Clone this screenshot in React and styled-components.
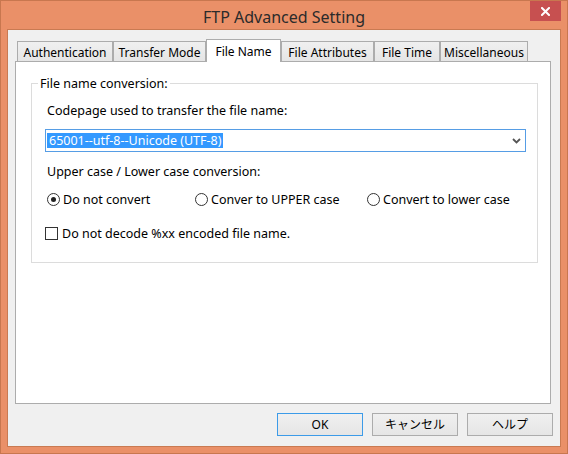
import React from "react";
import styled, { createGlobalStyle } from "styled-components";

const GlobalStyle = createGlobalStyle`
  html, body {
    margin: 0;
    padding: 0;
    background: #ea9068;
  }
  body {
    font-family: "Noto Sans", "Noto Sans CJK JP", sans-serif;
    font-size: 12.5px;
    line-height: 15px;
    color: #000;
  }
  * { box-sizing: border-box; }
`;

const Frame = styled.div`
  width: 568px;
  height: 454px;
  background: #ea9068;
  border: 1px solid #c8774f;
  display: flex;
  flex-direction: column;
`;

const TitleBar = styled.div`
  height: 28px;
  flex: none;
  display: grid;
  grid-template-columns: 1fr auto 1fr;
`;

const Title = styled.div`
  grid-column: 2;
  align-self: center;
  padding-top: 3px;
  font-family: "Noto Sans", sans-serif;
  font-size: 16px;
  line-height: 20px;
  color: #2b2b2b;
  white-space: nowrap;
`;

const CloseButton = styled.div`
  grid-column: 3;
  justify-self: end;
  align-self: start;
  width: 31px;
  height: 20px;
  margin-right: 6px;
  background: #c75050;
  display: flex;
  align-items: center;
  justify-content: center;
`;

const Client = styled.div`
  flex: 1;
  margin: 0 6px 6px;
  border: 1px solid #c97a52;
  background: #f0f0f0;
  display: flex;
  flex-direction: column;
  padding: 9px 7px 10px 7px;
`;

const TabRow = styled.div`
  display: flex;
  align-items: flex-end;
  height: 22px;
  padding-left: 2px;
  position: relative;
  z-index: 1;
`;

const Tab = styled.div`
  width: ${(p) => p.$w}px;
  height: ${(p) => (p.$active ? 23 : 20)}px;
  margin-bottom: ${(p) => (p.$active ? -1 : 0)}px;
  border: 1px solid #acacac;
  border-bottom: none;
  background: ${(p) =>
    p.$active ? "#ffffff" : "linear-gradient(#f0f0f0, #e5e5e5)"};
  display: flex;
  align-items: center;
  justify-content: center;
  padding-top: ${(p) => (p.$active ? 0 : 1)}px;
  font-size: 12px;
  white-space: nowrap;
  flex: none;
`;

const Panel = styled.div`
  height: 343px;
  margin-right: 2px;
  border: 1px solid #acacac;
  background: #fff;
  padding: 14px 12px 0 15px;
`;

const Group = styled.fieldset`
  margin: 0;
  padding: 0;
  border: 1px solid #dcdcdc;
  min-width: 0;
`;

const Legend = styled.legend`
  margin-left: 6px;
  padding: 0 2px;
  line-height: 15px;
`;

const GroupBody = styled.div`
  display: flex;
  flex-direction: column;
  padding: 12px 11px 21px 13px;
`;

const Label = styled.div`
  line-height: 15px;
  margin-left: 2px;
  margin-top: ${(p) => p.$mt || 0}px;
`;

const Combo = styled.div`
  margin-top: 11px;
  height: 23px;
  border: 1px solid #569de5;
  background: #fff;
  display: flex;
  align-items: center;
  padding: 0 4px 0 1px;
`;

const Selection = styled.span`
  background: #3399ff;
  color: #fff;
  line-height: 15px;
  padding: 0 2px 0 2px;
  white-space: nowrap;
`;

const Chevron = styled.svg`
  margin-left: auto;
  flex: none;
`;

const RadioRow = styled.div`
  margin-top: 13px;
  margin-left: 2px;
  display: grid;
  grid-template-columns: 148px 172px auto;
  height: 15px;
`;

const Option = styled.label`
  display: flex;
  align-items: center;
  gap: 3px;
  white-space: nowrap;
  line-height: 15px;
`;

const RadioDot = styled.span`
  width: 13px;
  height: 13px;
  border-radius: 50%;
  border: 1px solid #333;
  background: #fff;
  display: flex;
  align-items: center;
  justify-content: center;
  flex: none;

  &::after {
    content: "";
    width: 5px;
    height: 5px;
    border-radius: 50%;
    background: ${(p) => (p.$checked ? "#222" : "transparent")};
  }
`;

const CheckRow = styled.label`
  margin-top: 19px;
  display: flex;
  align-items: center;
  gap: 4px;
  line-height: 15px;
`;

const CheckBox = styled.span`
  width: 13px;
  height: 13px;
  border: 1px solid #333;
  background: #fff;
  flex: none;
`;

const ButtonRow = styled.div`
  margin-top: 9px;
  display: flex;
  justify-content: flex-end;
  gap: 9px;
`;

const Button = styled.div`
  width: 86px;
  height: 23px;
  border: 1px solid ${(p) => (p.$default ? "#3c9be8" : "#acacac")};
  background: linear-gradient(#f0f0f0, #e5e5e5);
  display: flex;
  align-items: center;
  justify-content: center;
  font-family: "Noto Sans", "Noto Sans CJK JP", sans-serif;
  font-size: 12px;
`;

const tabs = [
  { label: "Authentication", w: 96 },
  { label: "Transfer Mode", w: 93 },
  { label: "File Name", w: 75, active: true },
  { label: "File Attributes", w: 93 },
  { label: "File Time", w: 66 },
  { label: "Miscellaneous", w: 88 },
];

export default function App() {
  return (
    <>
      <GlobalStyle />
      <Frame>
        <TitleBar>
          <Title>FTP Advanced Setting</Title>
          <CloseButton>
            <svg width="9" height="9" viewBox="0 0 9 9">
              <path
                d="M1 1 L8 8 M8 1 L1 8"
                stroke="#fff"
                strokeWidth="2"
                strokeLinecap="square"
              />
            </svg>
          </CloseButton>
        </TitleBar>
        <Client>
          <TabRow>
            {tabs.map((t) => (
              <Tab key={t.label} $w={t.w} $active={t.active}>
                {t.label}
              </Tab>
            ))}
          </TabRow>
          <Panel>
            <Group>
              <Legend>File name conversion:</Legend>
              <GroupBody>
                <Label>Codepage used to transfer the file name:</Label>
                <Combo>
                  <Selection>65001--utf-8--Unicode (UTF-8)</Selection>
                  <Chevron width="9" height="6" viewBox="0 0 9 6">
                    <path
                      d="M1 1 L4.5 4.5 L8 1"
                      fill="none"
                      stroke="#555"
                      strokeWidth="1.8"
                    />
                  </Chevron>
                </Combo>
                <Label $mt={12}>Upper case / Lower case conversion:</Label>
                <RadioRow>
                  <Option>
                    <RadioDot $checked />
                    Do not convert
                  </Option>
                  <Option>
                    <RadioDot />
                    Conver to UPPER case
                  </Option>
                  <Option>
                    <RadioDot />
                    Convert to lower case
                  </Option>
                </RadioRow>
                <CheckRow>
                  <CheckBox />
                  Do not decode %xx encoded file name.
                </CheckRow>
              </GroupBody>
            </Group>
          </Panel>
          <ButtonRow>
            <Button $default>OK</Button>
            <Button>キャンセル</Button>
            <Button>ヘルプ</Button>
          </ButtonRow>
        </Client>
      </Frame>
    </>
  );
}
